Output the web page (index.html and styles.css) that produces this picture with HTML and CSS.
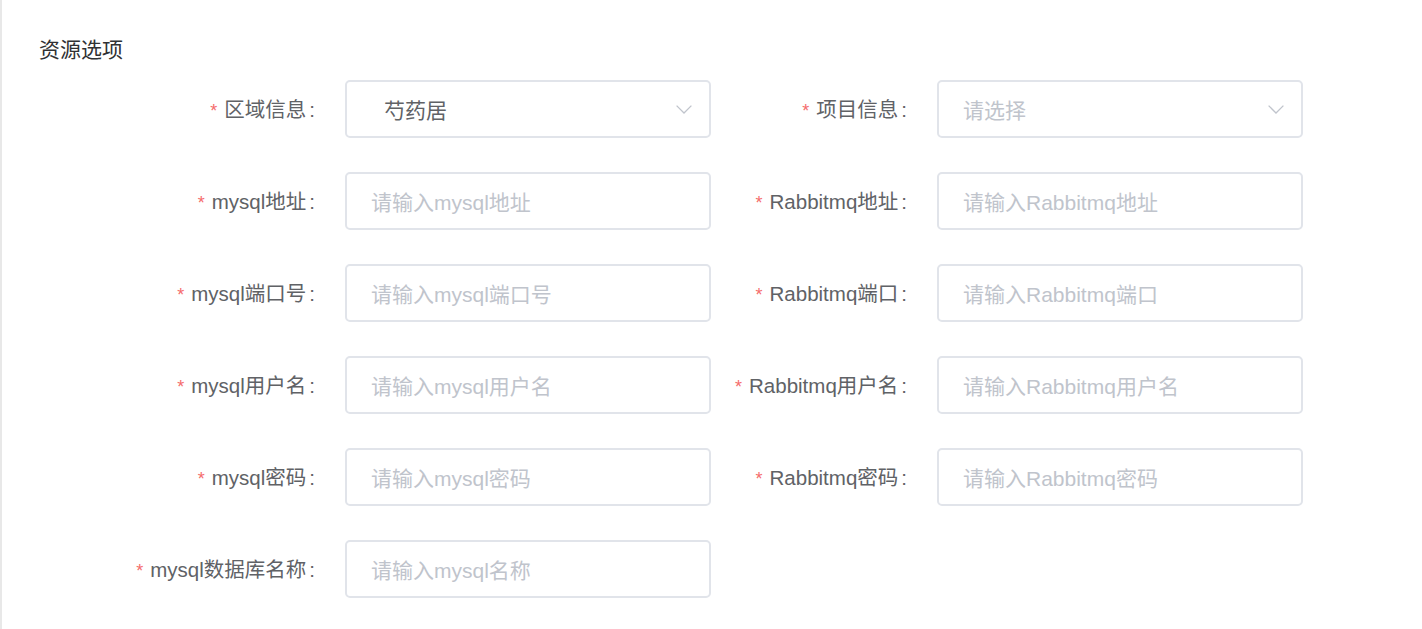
FILE: index.html
```html
<!DOCTYPE html>
<html lang="zh">
<head>
<meta charset="utf-8">
<link rel="stylesheet" href="styles.css">
</head>
<body>
<div class="page">
  <div class="section-title">资源选项</div>
  <div class="form">
    <div class="row">
      <div class="item">
        <label class="label"><span class="req">*</span>区域信息<span class="colon">:</span></label>
        <div class="control select"><span class="value">芍药居</span>
          <svg class="arrow" width="16" height="9" viewBox="0 0 16 9"><path d="M0.6 0.6 L8 8 L15.4 0.6" fill="none" stroke="#c0c4cc" stroke-width="1.3"/></svg>
        </div>
      </div>
      <div class="item">
        <label class="label"><span class="req">*</span>项目信息<span class="colon">:</span></label>
        <div class="control select"><span class="ph">请选择</span>
          <svg class="arrow" width="16" height="9" viewBox="0 0 16 9"><path d="M0.6 0.6 L8 8 L15.4 0.6" fill="none" stroke="#c0c4cc" stroke-width="1.3"/></svg>
        </div>
      </div>
    </div>
    <div class="row">
      <div class="item">
        <label class="label"><span class="req">*</span>mysql地址<span class="colon">:</span></label>
        <div class="control"><span class="ph">请输入mysql地址</span></div>
      </div>
      <div class="item">
        <label class="label"><span class="req">*</span>Rabbitmq地址<span class="colon">:</span></label>
        <div class="control"><span class="ph">请输入Rabbitmq地址</span></div>
      </div>
    </div>
    <div class="row">
      <div class="item">
        <label class="label"><span class="req">*</span>mysql端口号<span class="colon">:</span></label>
        <div class="control"><span class="ph">请输入mysql端口号</span></div>
      </div>
      <div class="item">
        <label class="label"><span class="req">*</span>Rabbitmq端口<span class="colon">:</span></label>
        <div class="control"><span class="ph">请输入Rabbitmq端口</span></div>
      </div>
    </div>
    <div class="row">
      <div class="item">
        <label class="label"><span class="req">*</span>mysql用户名<span class="colon">:</span></label>
        <div class="control"><span class="ph">请输入mysql用户名</span></div>
      </div>
      <div class="item">
        <label class="label"><span class="req">*</span>Rabbitmq用户名<span class="colon">:</span></label>
        <div class="control"><span class="ph">请输入Rabbitmq用户名</span></div>
      </div>
    </div>
    <div class="row">
      <div class="item">
        <label class="label"><span class="req">*</span>mysql密码<span class="colon">:</span></label>
        <div class="control"><span class="ph">请输入mysql密码</span></div>
      </div>
      <div class="item">
        <label class="label"><span class="req">*</span>Rabbitmq密码<span class="colon">:</span></label>
        <div class="control"><span class="ph">请输入Rabbitmq密码</span></div>
      </div>
    </div>
    <div class="row">
      <div class="item">
        <label class="label"><span class="req">*</span>mysql数据库名称<span class="colon">:</span></label>
        <div class="control"><span class="ph">请输入mysql名称</span></div>
      </div>
    </div>
  </div>
</div>
</body>
</html>
```
FILE: styles.css
```css
html, body {
  margin: 0;
  padding: 0;
  background: #fff;
  height: 100%;
  overflow: hidden;
}
body {
  font-family: "Liberation Sans", "Noto Sans CJK SC", sans-serif;
}
.page {
  border-left: 2px solid #e8e8e8;
  min-height: 629px;
  box-sizing: border-box;
  padding-top: 38px;
}
.section-title {
  padding-left: 37px;
  font-size: 21px;
  line-height: 24px;
  color: #303133;
  margin-bottom: 18px;
}
.form {
  padding-left: 117px;
}
.row {
  display: flex;
  margin-bottom: 34px;
}
.item {
  display: flex;
  align-items: center;
}
.label {
  width: 226px;
  box-sizing: border-box;
  padding-right: 30px;
  padding-bottom: 3px;
  text-align: right;
  font-size: 20.5px;
  color: #606266;
  white-space: nowrap;
}
.colon {
  margin-left: 3px;
}
.req {
  color: #f56c6c;
  margin-right: 7px;
  font-size: 18px;
}
.control {
  width: 366px;
  height: 58px;
  box-sizing: border-box;
  border: 2px solid #e1e4ea;
  border-radius: 5px;
  padding: 0 17px 0 24px;
  display: flex;
  align-items: center;
  font-size: 21px;
}
.value {
  color: #606266;
  margin-left: 13px;
}
.ph {
  color: #c0c4cc;
}
.arrow {
  margin-left: auto;
}
```
